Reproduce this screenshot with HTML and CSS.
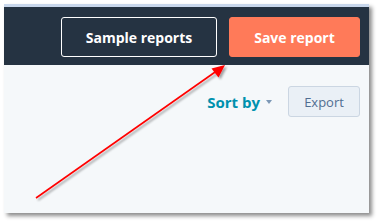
FILE: index.html
```html
<!DOCTYPE html>
<html>
<head>
<meta charset="utf-8">
<link rel="stylesheet" href="styles.css">
</head>
<body>
<div class="frame">
  <div class="header">
    <button class="btn btn-outline">Sample reports</button>
    <button class="btn btn-primary">Save report</button>
  </div>
  <div class="content">
    <div class="toolbar">
      <span class="sort">Sort by <span class="caret"></span></span>
      <button class="btn-export">Export</button>
    </div>
  </div>
</div>
<svg class="arrow" width="378" height="222" viewBox="0 0 378 222">
  <defs>
    <filter id="sh" x="-20%" y="-20%" width="140%" height="140%">
      <feDropShadow dx="2" dy="2" stdDeviation="1.2" flood-color="#000" flood-opacity="0.35"/>
    </filter>
  </defs>
  <g filter="url(#sh)">
    <line x1="36" y1="198" x2="218" y2="70" stroke="#ff0000" stroke-width="1.6"/>
    <polygon points="225,65 211.5,68.5 218.5,77.5" fill="#ff0000"/>
  </g>
</svg>
</body>
</html>
```
FILE: styles.css
```css
html, body {
  margin: 0;
  padding: 0;
  background: #ffffff;
  width: 378px;
  height: 222px;
  overflow: hidden;
}
.frame {
  margin: 4px 0 0 4px;
  width: 365px;
  height: 209px;
  box-shadow: 3px 3px 4px rgba(0, 0, 0, 0.45);
  display: flex;
  flex-direction: column;
  font-family: "Open Sans", "Liberation Sans", sans-serif;
  background: #f5f8fa;
}
.header {
  background: #253342;
  border-top: 3px solid #c8d7ec;
  display: flex;
  justify-content: flex-end;
  align-items: flex-start;
  padding: 10px 9px 0 0;
  box-sizing: border-box;
  height: 61px;
  gap: 12px;
}
.btn {
  height: 40px;
  border-radius: 3px;
  font-family: "Open Sans", "Liberation Sans", sans-serif;
  font-weight: 700;
  font-size: 14px;
  color: #ffffff;
  padding: 0;
  cursor: pointer;
}
.btn-outline {
  width: 156px;
  background: #253342;
  border: 1px solid #ffffff;
}
.btn-primary {
  width: 131px;
  background: #ff7a59;
  border: 1px solid #ff7a59;
}
.content {
  flex: 1;
  background: #f5f8fa;
}
.toolbar {
  display: flex;
  justify-content: flex-end;
  align-items: center;
  padding: 21px 9px 0 0;
  gap: 16px;
}
.sort {
  color: #0091ae;
  font-weight: 700;
  font-size: 15px;
  display: flex;
  align-items: center;
  gap: 6px;
}
.caret {
  width: 0;
  height: 0;
  border-left: 3.5px solid transparent;
  border-right: 3.5px solid transparent;
  border-top: 4px solid #7c98b6;
  margin-top: 1px;
}
.btn-export {
  width: 72px;
  height: 31px;
  background: #eaf0f6;
  border: 1px solid #cbd6e2;
  border-radius: 3px;
  color: #506e91;
  font-family: "Open Sans", "Liberation Sans", sans-serif;
  font-size: 13px;
  padding: 0;
}
.arrow {
  position: absolute;
  left: 0;
  top: 0;
  pointer-events: none;
}
```
